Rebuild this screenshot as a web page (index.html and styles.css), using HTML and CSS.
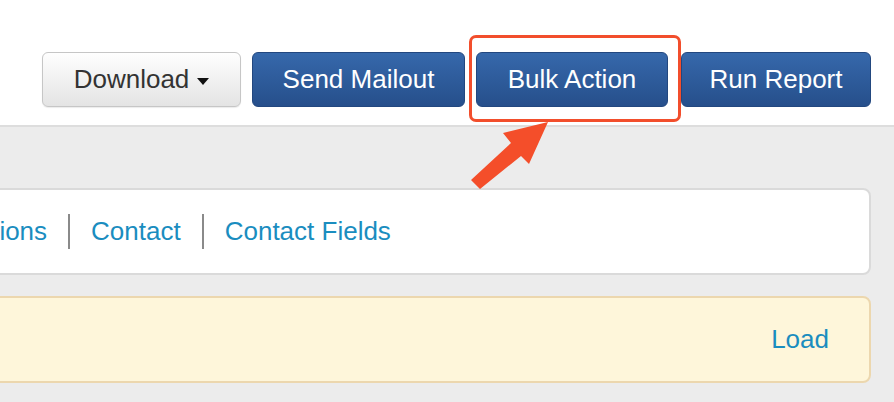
FILE: index.html
```html
<!DOCTYPE html>
<html lang="en">
<head>
<meta charset="utf-8">
<title>Bulk Action</title>
<link rel="stylesheet" href="styles.css">
</head>
<body>
<header class="toolbar">
  <button class="btn btn-default btn-download">Download <span class="caret"></span></button>
  <button class="btn btn-primary btn-mailout">Send Mailout</button>
  <button class="btn btn-primary btn-bulk">Bulk Action</button>
  <button class="btn btn-primary btn-report">Run Report</button>
</header>
<main class="content">
  <nav class="panel tabs">
    <a class="tab">Subscriptions</a>
    <span class="sep"></span>
    <a class="tab">Contact</a>
    <span class="sep"></span>
    <a class="tab">Contact Fields</a>
  </nav>
  <div class="panel loadbar">
    <a class="tab">Load</a>
  </div>
</main>
<div class="highlight"></div>
<svg class="arrow" width="894" height="402" viewBox="0 0 894 402">
  <polygon points="548,122 529,164 521,156 480,189 471,180 511,143 503,133" fill="#f44e2a"/>
</svg>
</body>
</html>
```

FILE: styles.css
```css
html, body {
  margin: 0;
  padding: 0;
}
body {
  width: 894px;
  height: 402px;
  overflow: hidden;
  background: #ececec;
  font-family: "Liberation Sans", Arial, Helvetica, sans-serif;
  position: relative;
}
.toolbar {
  box-sizing: border-box;
  height: 127px;
  background: #ffffff;
  border-bottom: 2px solid #dddddd;
  display: flex;
  justify-content: flex-end;
  align-items: flex-start;
  padding: 52px 23px 0 0;
}
.btn {
  box-sizing: border-box;
  height: 55px;
  font-family: inherit;
  font-size: 26px;
  border-radius: 6px;
  padding: 0;
  display: flex;
  align-items: center;
  justify-content: center;
  cursor: pointer;
}
.btn-default {
  background: linear-gradient(#fefefe, #e4e4e4);
  border: 1px solid #c6c6c6;
  color: #333333;
  box-shadow: 0 1px 1px rgba(0,0,0,0.08);
}
.btn-primary {
  background: linear-gradient(#3668ab, #264f8b);
  border: 1px solid #22477f;
  color: #ffffff;
}
.btn-download { width: 199px; margin-right: 11px; }
.btn-mailout { width: 213px; margin-right: 11px; }
.btn-bulk { width: 192px; margin-right: 13px; }
.btn-report { width: 190px; }
.caret {
  display: inline-block;
  width: 0;
  height: 0;
  margin-left: 8px;
  margin-top: 4px;
  border-left: 6px solid transparent;
  border-right: 6px solid transparent;
  border-top: 7px solid #111111;
}
.content {
  display: flex;
  flex-direction: column;
  gap: 21px;
  padding: 61px 23px 0 0;
}
.panel {
  box-sizing: border-box;
  height: 87px;
  margin-left: -150px;
  border-radius: 8px;
  display: flex;
  align-items: center;
}
.tabs {
  background: #ffffff;
  border: 2px solid #dadada;
  padding-left: 39px;
}
.tab {
  color: #1a8dbf;
  font-size: 26px;
  text-decoration: none;
  white-space: nowrap;
}
.sep {
  width: 2px;
  height: 35px;
  background: #8a8a8a;
  margin: 0 21px 0 21px;
}
.loadbar {
  background: #fef6da;
  border: 2px solid #ecd7ae;
  justify-content: flex-end;
  padding-right: 40px;
}
.highlight {
  position: absolute;
  left: 469px;
  top: 35px;
  width: 212px;
  height: 87px;
  box-sizing: border-box;
  border: 3px solid #f24e2c;
  border-radius: 7px;
}
.arrow {
  position: absolute;
  left: 0;
  top: 0;
}
```
